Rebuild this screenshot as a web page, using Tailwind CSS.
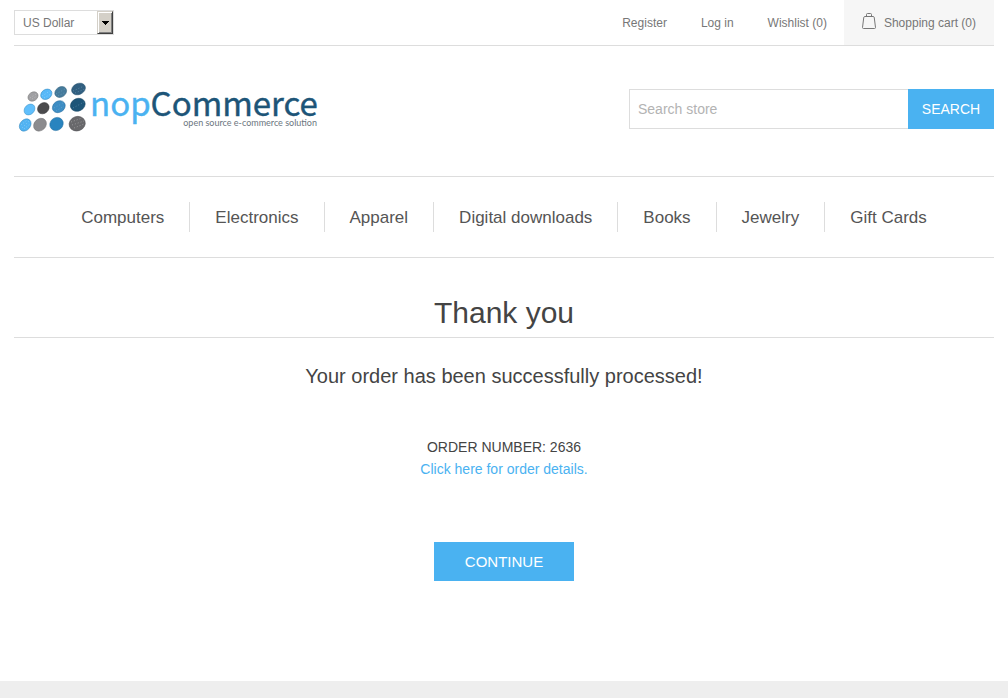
<!DOCTYPE html>
<html lang="en">
<head>
<meta charset="utf-8">
<meta name="viewport" content="width=device-width, initial-scale=1">
<title>nopCommerce - Thank you</title>
<script src="https://cdn.jsdelivr.net/npm/@tailwindcss/browser@4"></script>
</head>
<body class="flex min-h-screen flex-col bg-white font-['Liberation_Sans',Arial,sans-serif] text-sm text-[#444]">
<div class="mx-auto w-full max-w-[1200px] flex-1 px-3.5">
  <header>
    <div class="flex items-start justify-between border-b border-[#ddd] text-xs text-[#777]">
      <div class="relative mt-2.5">
        <select aria-label="Currency" class="block h-[25px] w-[100px] appearance-none border border-[#ddd] bg-white pl-2 text-xs text-[#777]">
          <option>US Dollar</option>
          <option>Euro</option>
        </select>
        <span class="pointer-events-none absolute top-px right-px flex h-[23px] w-4 items-center justify-center border border-t-[#d4d0c8] border-l-[#d4d0c8] border-r-[#404040] border-b-[#404040] bg-[#d4d0c8] shadow-[inset_1px_1px_#fff,inset_-1px_-1px_#808080]">
          <svg class="h-1 w-[7px]" viewBox="0 0 7 4" shape-rendering="crispEdges" aria-hidden="true"><path d="M0 0H7V1H6V2H5V3H4V4H3V3H2V2H1V1H0Z" fill="#000"/></svg>
        </span>
      </div>
      <nav aria-label="Account" class="flex h-[45px] items-center">
        <a href="#" class="px-[17px]">Register</a>
        <a href="#" class="px-[17px]">Log in</a>
        <a href="#" class="px-[17px]">Wishlist (0)</a>
        <a href="#" class="flex h-full items-center gap-2 bg-[#f6f6f6] px-[18px]">
          <svg class="mb-1 h-[17px] w-3.5" viewBox="0 0 14 17" fill="none" stroke="#777" aria-hidden="true"><path d="M2.500 4.500H11.500Q12.100 4.500 12.300 6L13.500 15.500Q13.500 16.500 12.500 16.500H1.500Q.5 16.500.5 15.500L1.700 6Q1.900 4.500 2.500 4.500ZM4.500 4.500V2.500Q4.500 1.500 5.500 1.500H8.500Q9.500 1.500 9.500 2.500V4.500"/></svg>
          <span>Shopping cart (0)</span>
        </a>
      </nav>
    </div>
    <div class="flex h-[131px] items-center justify-between border-b border-[#ddd]">
      <a href="#" aria-label="nopCommerce home" class="mb-1.5 block">
        <svg class="h-[60px] w-[310px]" viewBox="14 78 310 60" role="img" aria-label="nopCommerce, open source e-commerce solution">
          <g stroke-width=".5">
            <ellipse cx="33" cy="96.500" rx="5.400" ry="4.300" transform="rotate(-35 33 96.500)" fill="#a0a0a3" stroke="#777"/>
            <ellipse cx="46.300" cy="94.300" rx="6" ry="4.800" transform="rotate(-35 46.300 94.300)" fill="#58b9f8" stroke="#2f87be"/>
            <ellipse cx="60.700" cy="92" rx="6.300" ry="5" transform="rotate(-35 60.700 92)" fill="#457b9c" stroke="#2e5c78"/>
            <ellipse cx="78.500" cy="89" rx="7.200" ry="5.500" transform="rotate(-25 78.500 89)" fill="#315f80" stroke="#24506e"/>
            <ellipse cx="29.500" cy="109.500" rx="6" ry="4.800" transform="rotate(-45 29.500 109.500)" fill="#60bffc" stroke="#3d91c4"/>
            <ellipse cx="43.300" cy="108.200" rx="6.200" ry="5.200" transform="rotate(-40 43.300 108.200)" fill="#4b4b4d" stroke="#363638"/>
            <ellipse cx="58.800" cy="106.700" rx="6.800" ry="5.600" transform="rotate(-35 58.800 106.700)" fill="#3d8dc4" stroke="#276c9c"/>
            <ellipse cx="77.800" cy="104.800" rx="7.600" ry="6.300" transform="rotate(-25 77.800 104.800)" fill="#1d5578" stroke="#164561"/>
            <ellipse cx="25.200" cy="125" rx="6.700" ry="5.200" transform="rotate(-50 25.200 125)" fill="#52b3f2" stroke="#2c84bb"/>
            <ellipse cx="40" cy="124.700" rx="7" ry="5.800" transform="rotate(-45 40 124.700)" fill="#8b8b8e" stroke="#737375"/>
            <ellipse cx="56.500" cy="124" rx="7" ry="6.300" transform="rotate(-40 56.500 124)" fill="#2984bf" stroke="#1d6c9f"/>
            <ellipse cx="77.200" cy="123.700" rx="8.200" ry="7.200" transform="rotate(-20 77.200 123.700)" fill="#68686b" stroke="#505053"/>
          </g>
          <g fill="none" stroke-width=".7" stroke-dasharray="1 2" opacity=".6">
            <path d="M30 98L36 94M32 99L37 96" stroke="#ddd"/>
            <path d="M42 96L50 91M44 98L51 94M22 128L29 121M24 129L30 124M21 125L27 120" stroke="#c2e8ff"/>
            <path d="M56 94L65 89M58 96L66 92M73 91L84 86M75 93L85 89M54 108L63 103M56 111L64 106M73 108L84 102" stroke="#8fb9d2"/>
            <path d="M71 122L82 118M72 125L84 121M74 128L84 124" stroke="#ddd"/>
          </g>
          <text x="90" y="116" font-family="Noto Sans CJK SC, sans-serif" font-size="33" fill="#4ab2f1" stroke="#4ab2f1" stroke-width=".4">nop<tspan fill="#1d5578" stroke="#1d5578">Commerce</tspan></text>
          <text x="317" y="126" text-anchor="end" font-family="Lato, sans-serif" font-size="9" fill="#6b7680">open source e-commerce solution</text>
        </svg>
      </a>
      <form class="mb-1 flex h-10 w-[365px]" onsubmit="return false">
        <input type="text" aria-label="Search store" placeholder="Search store" class="min-w-0 flex-1 border border-r-0 border-[#ddd] px-2 text-[#777] placeholder:text-[#b3b3b3]">
        <button type="submit" class="w-[86px] bg-[#4ab2f1] text-white">SEARCH</button>
      </form>
    </div>
    <nav aria-label="Categories" class="flex h-[81px] items-center justify-center border-b border-[#ddd] text-[17px] leading-7 text-[#555]">
      <a href="#" class="border-r border-[#ddd] px-[25px] pt-0.5">Computers</a>
      <a href="#" class="border-r border-[#ddd] px-[25px] pt-0.5">Electronics</a>
      <a href="#" class="border-r border-[#ddd] px-[25px] pt-0.5">Apparel</a>
      <a href="#" class="border-r border-[#ddd] px-[25px] pt-0.5">Digital downloads</a>
      <a href="#" class="border-r border-[#ddd] px-[25px] pt-0.5">Books</a>
      <a href="#" class="border-r border-[#ddd] px-[25px] pt-0.5">Jewelry</a>
      <a href="#" class="px-[25px] pt-0.5">Gift Cards</a>
    </nav>
  </header>
  <main class="flex flex-col items-center pt-[30px] text-center">
    <h1 class="w-full border-b border-[#ddd] text-[30px] leading-[49px]">Thank you</h1>
    <p class="mt-[26px] text-xl leading-6">Your order has been successfully processed!</p>
    <p class="mt-12 leading-[22px]">ORDER NUMBER: 2636</p>
    <a href="#" class="leading-[22px] text-[#4ab2f1]">Click here for order details.</a>
    <button type="button" class="mt-[62px] mb-[100px] h-[39px] w-[140px] bg-[#4ab2f1] text-[15px] text-white">CONTINUE</button>
  </main>
</div>
<footer class="h-[17px] bg-[#eee]"></footer>
</body>
</html>
